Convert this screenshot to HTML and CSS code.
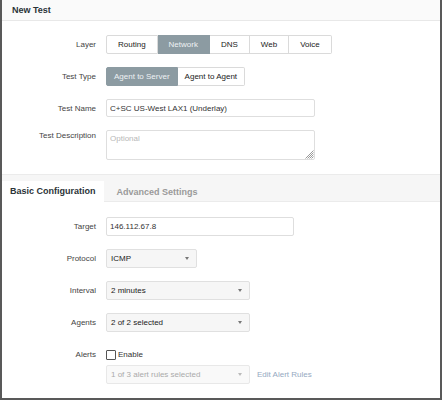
FILE: index.html
```html
<!DOCTYPE html>
<html>
<head>
<meta charset="utf-8">
<link rel="stylesheet" href="styles.css">
</head>
<body>
<div class="panel">
  <header class="panel-head">New Test</header>

  <section class="form form-top">
    <span class="lbl">Layer</span>
    <div class="btn-group">
      <span class="btn btn-layer">Routing</span>
      <span class="btn btn-layer active">Network</span>
      <span class="btn btn-layer">DNS</span>
      <span class="btn btn-layer">Web</span>
      <span class="btn btn-layer">Voice</span>
    </div>

    <span class="lbl">Test Type</span>
    <div class="btn-group">
      <span class="btn btn-type active">Agent to Server</span>
      <span class="btn btn-type">Agent to Agent</span>
    </div>

    <span class="lbl">Test Name</span>
    <input class="field field-wide" type="text" value="C+SC US-West LAX1 (Underlay)">

    <span class="lbl lbl-top">Test Description</span>
    <div class="textarea-wrap">
      <textarea class="field textarea" placeholder="Optional"></textarea>
      <svg class="grip" viewBox="0 0 10 10" width="10" height="10">
        <line x1="1.5" y1="9.5" x2="9.5" y2="1.5"/>
        <line x1="3.5" y1="9.5" x2="9.5" y2="3.5"/>
        <line x1="5.5" y1="9.5" x2="9.5" y2="5.5"/>
        <line x1="7.5" y1="9.5" x2="9.5" y2="7.5"/>
      </svg>
    </div>
  </section>

  <nav class="tabs">
    <span class="tab active">Basic Configuration</span>
    <span class="tab">Advanced Settings</span>
  </nav>

  <section class="form form-basic">
    <span class="lbl">Target</span>
    <input class="field field-target" type="text" value="146.112.67.8">

    <span class="lbl">Protocol</span>
    <div class="select select-sm"><span>ICMP</span><i class="caret"></i></div>

    <span class="lbl">Interval</span>
    <div class="select select-md"><span>2 minutes</span><i class="caret"></i></div>

    <span class="lbl">Agents</span>
    <div class="select select-md"><span>2 of 2 selected</span><i class="caret"></i></div>

    <span class="lbl lbl-top lbl-alerts">Alerts</span>
    <div class="alerts">
      <label class="check"><span class="box"></span>Enable</label>
      <div class="alert-rules">
        <div class="select select-md disabled"><span>1 of 3 alert rules selected</span><i class="caret"></i></div>
        <a class="link">Edit Alert Rules</a>
      </div>
    </div>
  </section>
</div>
</body>
</html>
```

FILE: styles.css
```css
html, body {
  margin: 0;
  padding: 0;
  background: #ffffff;
}

.panel {
  width: 442px;
  height: 400px;
  box-sizing: border-box;
  border-left: 2px solid #595959;
  border-right: 2px solid #595959;
  border-bottom: 2px solid #595959;
  overflow: hidden;
  font-family: "Liberation Sans", Arial, sans-serif;
  font-size: 8px;
  color: #333333;
  background: #ffffff;
}

.panel-head {
  height: 21px;
  box-sizing: border-box;
  border-bottom: 1px solid #e8e8e8;
  padding-left: 10px;
  display: flex;
  align-items: center;
  font-size: 9px;
  font-weight: bold;
  color: #2b3338;
  background: #fafafa;
}

.form {
  display: grid;
  grid-template-columns: 94px 1fr;
  column-gap: 10px;
  row-gap: 13px;
  align-items: center;
  justify-items: start;
}

.form-top {
  padding: 14px 0 14px 0;
}

.form-basic {
  padding: 15px 0 0 0;
}

.lbl {
  justify-self: end;
  color: #444444;
  line-height: 9px;
}

.lbl-top {
  align-self: start;
  margin-top: 1px;
}

.lbl-alerts {
  margin-top: 5px;
}

.btn-group {
  display: flex;
  height: 19px;
}

.btn {
  display: flex;
  align-items: center;
  justify-content: center;
  box-sizing: border-box;
  height: 19px;
  border: 1px solid #dadada;
  border-left-width: 0;
  background: #ffffff;
  color: #222222;
}

.btn:first-child {
  border-left-width: 1px;
  border-radius: 2px 0 0 2px;
}

.btn:last-child {
  border-radius: 0 2px 2px 0;
}

.btn.active {
  background: #8c9ba2;
  border-color: #8c9ba2;
  color: #eef2f4;
}

.btn-layer {
  padding: 0 11px;
}

.btn-type {
  padding: 0 7px;
}

.field {
  box-sizing: border-box;
  height: 18px;
  border: 1px solid #dedede;
  border-radius: 2px;
  padding: 0 3px;
  margin: 0;
  font-family: "Liberation Sans", Arial, sans-serif;
  font-size: 8px;
  color: #333333;
  background: #ffffff;
  outline: none;
}

.field-wide {
  width: 209px;
}

.field-target {
  width: 188px;
  height: 19px;
}

.textarea-wrap {
  position: relative;
  width: 209px;
  height: 30px;
}

.textarea {
  display: block;
  width: 209px;
  height: 30px;
  padding: 3px 3px;
  resize: none;
}

.textarea::placeholder {
  color: #b8b8b8;
}

.grip {
  position: absolute;
  right: 1px;
  bottom: 1px;
  stroke: #808080;
  stroke-width: 0.8;
}

.tabs {
  display: flex;
  align-items: flex-end;
  gap: 5px;
  height: 28px;
  box-sizing: border-box;
  border-top: 1px solid #ebebeb;
  border-bottom: 1px solid #ebebeb;
  background: #f6f6f6;
}

.tab {
  display: flex;
  align-items: center;
  height: 20px;
  padding: 0 8px;
  margin-bottom: -1px;
  font-size: 9px;
  font-weight: bold;
  color: #9a9a9a;
}

.tab.active {
  background: #ffffff;
  color: #2b3338;
  padding-bottom: 1px;
}

.select {
  display: flex;
  align-items: center;
  justify-content: space-between;
  box-sizing: border-box;
  height: 19px;
  padding: 0 7px 0 4px;
  border: 1px solid #e0e0e0;
  border-radius: 2px;
  background: #f6f6f6;
  color: #222222;
}

.select-sm {
  width: 91px;
}

.select-md {
  width: 144px;
}

.caret {
  width: 0;
  height: 0;
  border-left: 2.5px solid transparent;
  border-right: 2.5px solid transparent;
  border-top: 3px solid #777777;
}

.select.disabled {
  background: #f9f9f9;
  border-color: #e8e8e8;
  color: #aaaaaa;
}

.select.disabled .caret {
  border-top-color: #bbbbbb;
}

.alerts {
  display: flex;
  flex-direction: column;
  gap: 1px;
}

.check {
  display: flex;
  align-items: center;
  gap: 2px;
  height: 19px;
  color: #333333;
}

.box {
  width: 10px;
  height: 10px;
  box-sizing: border-box;
  border: 1px solid #555555;
  border-radius: 1px;
  background: #ffffff;
}

.alert-rules {
  display: flex;
  align-items: center;
  gap: 7px;
}

.link {
  color: #95a9c1;
  text-decoration: none;
}
```
